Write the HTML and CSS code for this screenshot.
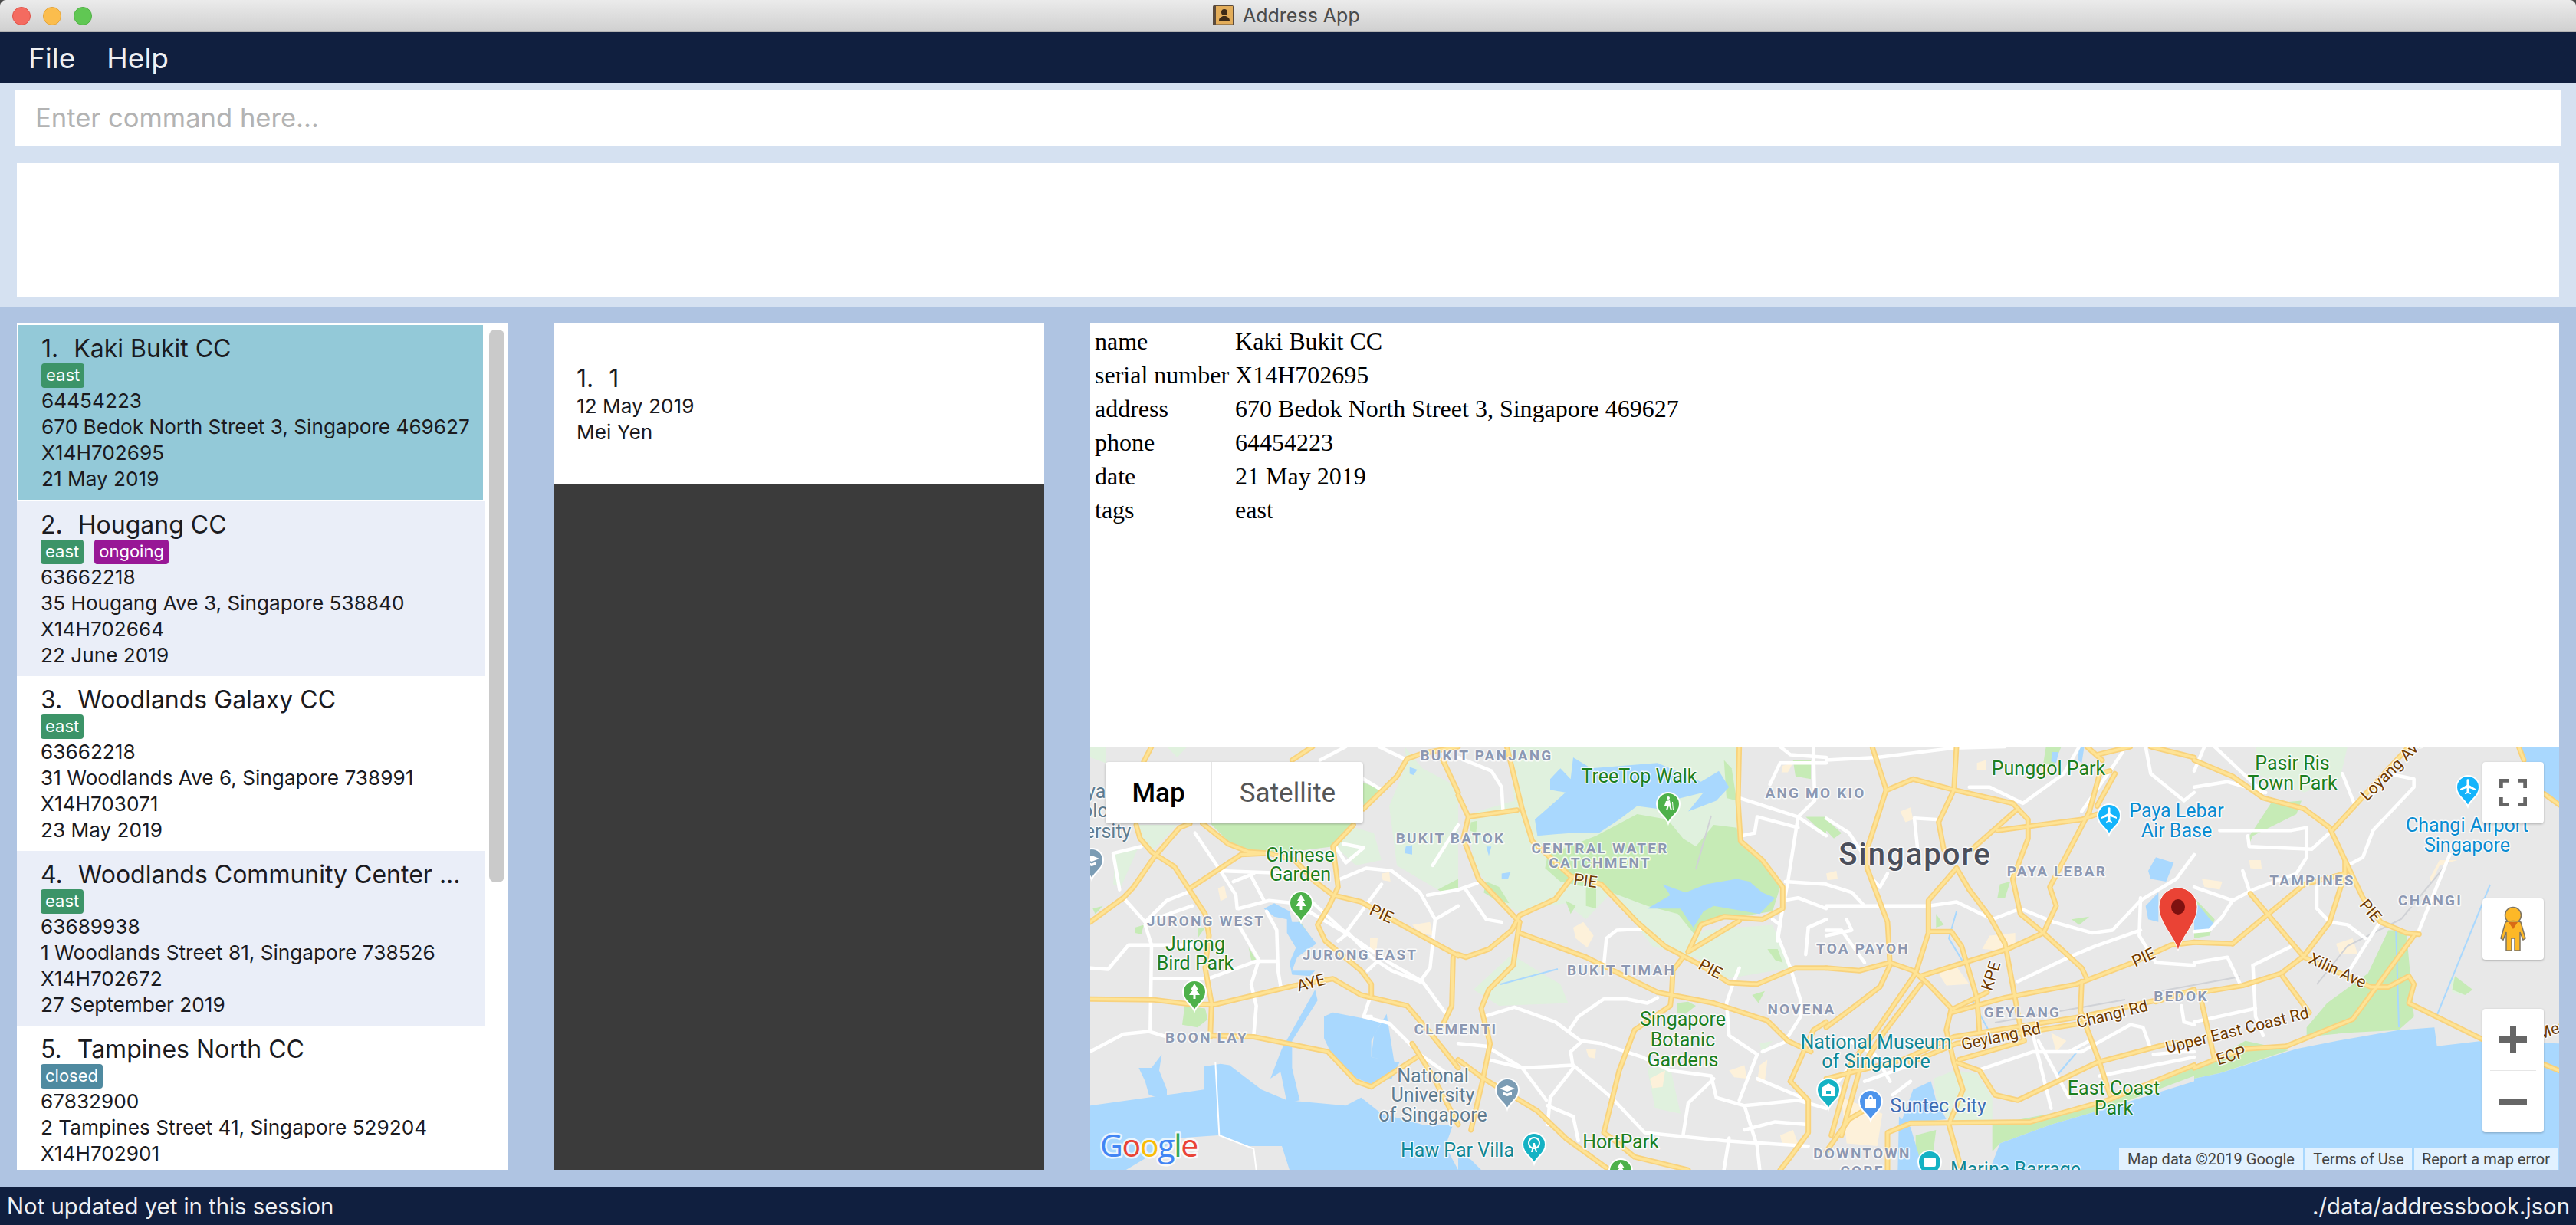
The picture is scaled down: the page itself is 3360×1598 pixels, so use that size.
FILE: index.html
```html
<!DOCTYPE html>
<html lang="en">
<head>
<meta charset="utf-8">
<title>Address App</title>
<link rel="stylesheet" href="styles.css">
</head>
<body>
<div class="app">
  <header class="titlebar">
    <div class="lights"><span class="light red"></span><span class="light yellow"></span><span class="light green"></span></div>
    <div class="wintitle">
      <svg class="appicon" viewBox="0 0 27 26"><rect x="0" y="0" width="27" height="26" rx="1.5" fill="#5a4a3c"/><rect x="4" y="1" width="22" height="23.5" fill="#e3ad5a"/><circle cx="15" cy="9" r="4" fill="#3d2a18"/><path d="M8 20c0-4 3-4.500 5-6h4c2 1.500 5 2 5 6z" fill="#3d2a18"/></svg>
      <span>Address App</span>
    </div>
  </header>
  <nav class="menubar"><span>File</span><span>Help</span></nav>
  <section class="topzone">
    <div class="command">Enter command here...</div>
    <div class="result"></div>
  </section>
  <main class="workspace">
    <section class="panel list">
      <div class="rows">
        <article class="row selected">
          <div class="name"><span>1.</span><span>Kaki Bukit CC</span></div>
          <div class="tags"><span class="tag east">east</span></div>
          <div>64454223</div>
          <div>670 Bedok North Street 3, Singapore 469627</div>
          <div>X14H702695</div>
          <div>21 May 2019</div>
        </article>
        <article class="row alt">
          <div class="name"><span>2.</span><span>Hougang CC</span></div>
          <div class="tags"><span class="tag east">east</span><span class="tag ongoing">ongoing</span></div>
          <div>63662218</div>
          <div>35 Hougang Ave 3, Singapore 538840</div>
          <div>X14H702664</div>
          <div>22 June 2019</div>
        </article>
        <article class="row">
          <div class="name"><span>3.</span><span>Woodlands Galaxy CC</span></div>
          <div class="tags"><span class="tag east">east</span></div>
          <div>63662218</div>
          <div>31 Woodlands Ave 6, Singapore 738991</div>
          <div>X14H703071</div>
          <div>23 May 2019</div>
        </article>
        <article class="row alt">
          <div class="name"><span>4.</span><span>Woodlands Community Center ...</span></div>
          <div class="tags"><span class="tag east">east</span></div>
          <div>63689938</div>
          <div>1 Woodlands Street 81, Singapore 738526</div>
          <div>X14H702672</div>
          <div>27 September 2019</div>
        </article>
        <article class="row">
          <div class="name"><span>5.</span><span>Tampines North CC</span></div>
          <div class="tags"><span class="tag closed">closed</span></div>
          <div>67832900</div>
          <div>2 Tampines Street 41, Singapore 529204</div>
          <div>X14H702901</div>
        </article>
      </div>
      <div class="thumb"></div>
    </section>
    <section class="panel middle">
      <div class="visit">
        <div class="name"><span>1.</span><span>1</span></div>
        <div>12 May 2019</div>
        <div>Mei Yen</div>
      </div>
      <div class="dark"></div>
    </section>
    <section class="panel detail">
      <div class="info">
        <table>
          <tr><td>name</td><td>Kaki Bukit CC</td></tr>
          <tr><td>serial number</td><td>X14H702695</td></tr>
          <tr><td>address</td><td>670 Bedok North Street 3, Singapore 469627</td></tr>
          <tr><td>phone</td><td>64454223</td></tr>
          <tr><td>date</td><td>21 May 2019</td></tr>
          <tr><td>tags</td><td>east</td></tr>
        </table>
      </div>
      <div class="map">
        <svg class="mapsvg" viewBox="0 0 1916 552" width="1916" height="552">
          <defs>
            <g id="highways">
              <g transform="scale(.33333 .35211)">
                <path d="M0 650 130 560 170 520 250 410 350 300 390 285"/>
                <path d="M180 290 195 340 240 390 330 445 385 525 450 620 465 700 450 820 475 950 470 1075"/>
                <path d="M390 525 590 400 700 395"/>
                <path d="M440 285 540 360 620 390 700 395 800 420 880 500 950 550 1060 575 1180 640 1440 775"/>
                <path d="M1030 290 950 370 970 520 935 590 890 660 920 720 1060 830 1100 880 1100 920"/>
                <path d="M0 935 250 938 400 955 490 955 800 885 950 860 1060 920 1240 960 1330 1060 1440 1190"/>
                <path d="M1420 780 1415 960 1380 1030"/>
                <path d="M470 1070 640 1075 930 1130 1040 1240 1100 1260 1280 1150"/>
                <path d="M1260 1100 1340 1220 1440 1400"/>
                <path d="M790 50 870 0"/><path d="M210 55 240 0"/>
                <path d="M1070 230 1200 110 1240 45 1300 25 1440 0"/>
                <path d="M1380 50 1440 170"/>
              </g>
              <g transform="translate(480 0) scale(.33333 .35211)">
                <path d="M190 0 250 230 290 350 440 480 560 510 700 650 810 740 950 810 1060 875 1170 880 1320 820 1440 820"/>
                <path d="M440 490 380 565 240 625 210 680 120 750 30 780 0 770"/>
                <path d="M0 180 40 260 20 340 80 490 170 580 240 650"/>
                <path d="M40 260 230 235"/>
                <path d="M240 690 500 780 780 910 1000 950 1210 1015 1290 1090 1380 1130"/>
                <path d="M240 650 215 810 120 900 90 970 125 1100 95 1240 50 1420"/>
                <path d="M0 1160 100 1230 310 1350 420 1450 580 1560"/>
                <path d="M880 780 840 830 835 920 830 960 690 1050 630 1200 570 1430 600 1450 690 1520 900 1568"/>
                <path d="M900 760 950 660 1040 630 1190 640 1270 600 1270 520 1190 420 1105 350 1095 200 1100 0"/>
                <path d="M900 760 1100 645"/>
                <path d="M1300 1240 1370 1310 1370 1430 1300 1520 1260 1568"/>
                <path d="M1300 1240 1390 1050 1440 1020"/>
              </g>
              <g transform="translate(960 0) scale(.33333 .35211)">
                <path d="M180 0 235 160 160 380 160 450 240 650 250 810 210 890 100 970 0 1040"/>
                <path d="M240 160 340 120 500 160 730 210 790 270 790 340 730 490 760 620 850 690 1000 820 1020 860"/>
                <path d="M500 160 510 0"/><path d="M500 160 440 280 460 380"/>
                <path d="M0 820 130 830 250 800 340 830 400 880 490 970 470 1050 500 1170 535 1270 480 1400 530 1568"/>
                <path d="M240 1568 240 1430 330 1395 800 1390 1100 1310 1440 1180"/>
                <path d="M510 450 400 570 400 690 350 840 190 1060 100 1170 20 1440"/>
                <path d="M370 880 225 1060 130 1200 60 1440"/>
                <path d="M400 685 490 685 530 740 590 930 600 1060"/>
                <path d="M370 850 710 750 850 690 900 590 875 520 1030 240 1070 100 1110 90"/>
                <path d="M510 450 560 530 640 630 700 730 760 1040 775 1090 520 1160"/>
                <path d="M500 970 630 910"/>
                <path d="M490 985 700 930 980 880 1200 800 1350 735 1440 725"/>
                <path d="M1000 870 995 980 1070 1170 1110 1290"/>
                <path d="M0 1230 300 1160 500 1075 1000 1000 1290 940"/>
                <path d="M330 1170 510 1100 1000 1025"/>
                <path d="M1290 945 1440 900"/>
                <path d="M510 1170 600 1200 660 1290 750 1310 1060 1170 1340 1100 1440 1095"/>
                <path d="M670 310 1000 270 1060 250"/>
                <path d="M570 380 750 230"/>
                <path d="M1060 30 1190 0"/><path d="M1020 0 1080 50"/><path d="M1270 0 1440 40"/>
                <path d="M1130 100 1060 220"/>
                <path d="M0 1500 90 1380 180 1330"/>
              </g>
              <g transform="translate(1440 0) scale(.33333 .35211)">
                <path d="M0 50 150 110 270 190 430 230 530 300 590 420 660 560 730 650 830 690 880 695"/>
                <path d="M590 420 590 470 530 650 430 775 340 840 190 885 60 905 0 910"/>
                <path d="M860 700 690 920 620 1010 360 1110 200 1120 80 1160 0 1190"/>
                <path d="M540 310 840 0"/>
                <path d="M150 730 430 510 590 470"/><path d="M0 725 150 730"/>
                <path d="M220 545 430 780 690 890 760 890 840 850 860 880 840 950 1130 1085 1428 1200"/>
                <path d="M345 850 450 985"/>
                <path d="M30 950 80 1160"/>
                <path d="M1370 175 1428 215"/><path d="M1270 0 1290 50"/>
              </g>
            </g>
          </defs>
          <rect class="land" width="1916" height="552"/>
          <g class="parks-light">
            <g transform="scale(.33333 .35211)">
              <path d="M0 0 60 0 60 60 0 40Z"/><path d="M300 0 380 0 340 40Z"/>
              <path d="M180 290 340 290 250 380 200 350Z"/><path d="M1000 290 1110 320 1140 420 1040 440 960 370Z"/>
              <path d="M1230 0 1300 80 1440 150 1440 500 1360 530 1200 440 1170 220 1240 60Z"/>
              <path d="M100 390 190 370 120 520 90 510Z"/>
              <path d="M10 620 50 590 40 600Z"/>
            </g>
            <g transform="translate(480 0) scale(.33333 .35211)">
              <path d="M200 0 1100 0 1090 300 900 420 800 540 950 680 1000 800 760 740 600 540 500 640 420 580 230 610 170 580 60 440 40 250 220 200Z"/>
              <path d="M960 680 1230 660 1300 820 1050 860 930 780Z"/>
              <path d="M210 770 310 830 400 880 430 950 160 960 60 900Z"/>
              <path d="M740 1190 830 1190 870 1360 770 1340Z"/>
              <path d="M1230 1090 1190 1140 1180 1100Z"/>
            </g>
            <g transform="translate(960 0) scale(.33333 .35211)">
              <path d="M420 1230 500 1200 590 1210 650 1300 650 1390 480 1390 430 1300Z"/>
            </g>
            <g transform="translate(1440 0) scale(.33333 .35211)">
              <path d="M240 0 600 0 570 120 430 170 240 100Z"/>
              <path d="M1000 850 1090 900 1040 920 1010 910Z"/>
            </g>
          </g>
          <g class="parks">
            <g transform="scale(.33333 .35211)">
              <path d="M470 285 1030 285 950 370 700 400 600 380 540 350Z"/>
              <path d="M1060 130 1140 160 1070 220Z"/>
              <path d="M370 960 450 970 460 1010 420 1040 360 1030Z"/>
              <path d="M780 680 820 645 880 730 830 745 800 720Z"/>
              <path d="M175 670 210 660 200 695 175 690Z"/><path d="M420 670 450 670 420 710Z"/><path d="M620 745 650 790 630 790Z"/>
              <path d="M1360 530 1440 490 1440 530 1370 535Z"/><path d="M10 600 50 590 20 620Z"/>
            </g>
            <g transform="translate(480 0) scale(.33333 .35211)">
              <path d="M540 330 700 250 820 270 880 340 930 370 1000 290 1090 300 1100 350 1200 430 1260 520 1230 610 1100 630 1000 640 920 690 860 620 740 590 600 540 540 490 540 600 500 590 500 520 400 500 340 450 350 400Z"/>
              <path d="M110 500 160 520 200 580 150 570 100 540Z"/><path d="M420 570 460 590 440 620Z"/><path d="M1210 750 1250 750 1270 800 1240 790Z"/>
              <path d="M1310 50 1380 50 1380 120 1320 110Z"/><path d="M1040 50 1070 80 1090 200 1050 190Z"/><path d="M1150 920 1200 905 1175 950Z"/>
              <path d="M855 950 900 945 930 960 890 990 855 985Z"/>
              <path d="M50 280 75 275 70 320 45 310Z"/><path d="M1360 260 1440 260 1440 330Z"/>
            </g>
            <g transform="translate(960 0) scale(.33333 .35211)">
              <path d="M0 270 60 320 30 340 0 310Z"/><path d="M860 0 920 0 890 70 850 60Z"/>
              <path d="M650 1400 1100 1320 1440 1190 1440 1220 1100 1340 880 1400 680 1470 650 1500Z"/>
              <path d="M350 1440 430 1420 410 1568 350 1568Z"/>
              <path d="M680 510 720 500 700 560 670 560Z"/><path d="M430 620 460 660 430 670Z"/>
              <path d="M960 640 1030 630 990 660Z"/>
            </g>
            <g transform="translate(1440 0) scale(.33333 .35211)">
              <path d="M440 1040 520 950 680 840 760 680 830 680 860 1000 800 1050 600 1060 440 1075Z"/>
              <path d="M0 1200 200 1090 370 1125 100 1210 0 1230Z"/>
              <path d="M210 340 300 210 420 200 400 250 230 330 210 370Z"/>
              <path d="M0 560 30 590 80 640 60 700 0 710Z"/>
              <path d="M1020 850 1090 900 1060 920 1010 900Z"/>
            </g>
          </g>
          <g class="water">
            <g transform="scale(.33333 .35211)">
              <path d="M0 1330 340 1285 445 1270 445 1185 510 1175 545 1180 670 1270 770 1310 1000 1330 1060 1300 1140 1360 1300 1400 1420 1400 1390 1480 1440 1568 780 1568 750 1480 620 1480 500 1440 350 1450 140 1568 0 1568Z"/>
              <path d="M190 1190 240 1190 280 1140 270 1200 300 1270 300 1310 230 1290 215 1240Z"/>
              <path d="M880 900 890 940 790 1090 790 1190 820 1310 770 1320 745 1205 705 1230 750 1120Z"/>
              <path d="M915 1000 950 985 1140 1020 1100 1090 1100 1150 1210 1170 1180 1230 1100 1250 1020 1220 940 1130 915 1080Z"/>
              <path d="M680 600 720 580 780 610 790 650 820 650 885 730 840 760 810 780 790 830 880 830 860 850 790 845 780 800 805 745 770 690 770 640 720 630Z"/>
              <path d="M1250 75 1280 85 1265 105 1250 100Z"/><path d="M1235 370 1260 365 1260 400 1230 395Z"/>
              <path d="M1190 1170 1160 990 1110 1070 1100 1150Z"/>
            </g>
            <g transform="translate(480 0) scale(.33333 .35211)">
              <path d="M360 120 400 80 440 120 450 40 520 80 780 60 950 130 1020 90 1060 150 1010 200 900 240 960 170 830 200 780 230 700 220 630 270 550 320 440 320 310 330 300 270 420 170 360 160Z"/>
              <path d="M800 510 890 540 970 510 1090 490 1140 500 1190 540 1240 560 1180 620 1000 590 960 610 920 670 870 600 740 600 830 550Z"/>
              <path d="M110 370 130 370 120 405Z"/><path d="M170 470 205 465 195 490 170 490Z"/>
              <path d="M0 1510 50 1530 90 1568 0 1568Z"/>
            </g>
            <g transform="translate(960 0) scale(.33333 .35211)">
              <path d="M340 1270 410 1240 430 1310 470 1380 290 1400Z"/>
              <path d="M280 1568 285 1370 330 1410 380 1568Z"/>
              <path d="M640 1568 680 1470 880 1400 1100 1340 1440 1240 1440 1568Z"/>
              <path d="M1260 460 1290 410 1360 430 1330 500 1270 490Z"/>
              <path d="M1250 590 1300 540 1300 650 1260 640Z"/>
              <path d="M990 0 1010 0 1000 60 985 50Z"/>
              <path d="M885 20 910 20 900 60 880 55Z"/>
            </g>
            <g transform="translate(1440 0) scale(.33333 .35211)">
              <path d="M0 1230 100 1210 400 1120 560 1090 800 1050 940 1040 950 1110 1130 1090 1428 1100 1428 1568 0 1568Z"/>
              <path d="M1280 0 1428 0 1428 220 1370 170 1300 60Z"/>
              <path d="M0 580 20 590 80 660 60 680 0 680Z"/>
            </g>
          </g>
          <g class="rivers">
            <path d="M1756 352 1826 180"/><path d="M1703 234 1707 366"/><path d="M1150 330 1180 385"/><path d="M1260 430 1290 395"/><path d="M535 310 610 290"/><path d="M1130 215 1120 250 1150 300"/>
          </g>
          <g class="blds">
            <g transform="scale(.33333 .35211)">
              <path d="M500 525 525 515 535 560 510 572Z"/><path d="M1095 710 1125 710 1120 760 1095 755Z"/><path d="M1260 660 1330 650 1340 700 1290 690Z"/><path d="M1140 470 1170 465 1175 500 1145 495Z"/>
            </g>
            <g transform="translate(480 0) scale(.33333 .35211)">
              <path d="M450 670 490 650 530 700 505 745 460 710Z"/><path d="M500 1120 540 1120 535 1155 510 1150Z"/><path d="M750 1230 810 1200 800 1260 760 1265Z"/><path d="M1060 1200 1120 1180 1130 1230 1080 1225Z"/><path d="M1180 1180 1210 1160 1200 1240 1170 1240Z"/><path d="M1260 1440 1310 1420 1330 1470 1270 1480Z"/><path d="M1270 70 1310 60 1290 95 1265 95Z"/>
            </g>
            <g transform="translate(960 0) scale(.33333 .35211)">
              <path d="M290 240 330 225 340 270 310 280Z"/><path d="M610 750 640 700 740 690 740 730 680 755Z"/><path d="M440 840 510 815 560 880 470 885Z"/><path d="M590 60 625 50 625 85 590 85Z"/><path d="M880 1060 940 1090 900 1130Z"/><path d="M0 470 40 460 45 490 5 495Z"/><path d="M60 1300 220 1360 200 1480 80 1470Z"/>
            </g>
            <g transform="translate(1440 0) scale(.33333 .35211)">
              <path d="M215 420 260 420 265 455 220 450Z"/><path d="M30 490 110 500 100 530 40 520Z"/><path d="M555 730 620 710 640 770 570 770Z"/><path d="M920 490 960 420 1030 420 960 440 930 500Z"/>
            </g>
          </g>
          <g class="rails">
            <path d="M1772 150 1710 225 1640 260 1600 310"/><path d="M1390 320 1500 300"/><path d="M790 160 810 90"/><path d="M1180 360 1350 330"/>
          </g>
          <g class="streets">
            <g transform="scale(.33333 .35211)">
              <path d="M0 820 70 825 150 735 400 735"/><path d="M215 660 240 735 235 1050"/>
              <path d="M240 860 460 860 650 795 730 795"/><path d="M0 1130 130 1065 230 1055 300 1075"/>
              <path d="M130 560 215 650 300 570 380 540"/><path d="M200 370 90 395 115 530"/>
              <path d="M410 320 510 460 570 550 575 600"/><path d="M510 460 650 465 800 470"/>
              <path d="M215 650 400 590"/><path d="M580 600 700 570 800 580 1000 690 1170 800 1300 870 1400 1000"/>
              <path d="M560 500 640 470"/><path d="M630 480 680 570"/>
              <path d="M690 610 730 680 735 830 745 885"/><path d="M580 660 660 790 630 880 650 960 640 1070"/>
              <path d="M1000 690 1140 510"/><path d="M970 720 1010 690 1100 780 1180 830 1290 870"/>
              <path d="M980 490 1080 450 1180 460 1290 540 1350 640 1330 820 1290 870"/>
              <path d="M1320 550 1440 530"/><path d="M1340 440 1440 290"/><path d="M1085 830 1130 790"/>
              <path d="M1095 930 1070 1000 1170 1025 1260 1110"/>
              <path d="M1290 1140 1440 1240"/><path d="M1070 120 1140 160"/><path d="M900 50 1000 0"/><path d="M1130 0 1230 45"/>
              <path d="M990 360 1070 375 1000 430 960 370"/>
              <path d="M850 560 1000 690"/><path d="M1350 640 1440 590"/><path d="M1100 1000 1070 1000"/>
            </g>
            <g class="thin" transform="scale(.33333 .35211)">
              <path d="M490 1170 505 1440 640 1490 650 1568"/>
            </g>
            <g transform="translate(480 0) scale(.33333 .35211)">
              <path d="M0 40 130 90 170 150 175 230"/><path d="M0 530 75 505"/><path d="M30 530 110 640 170 650"/>
              <path d="M100 1000 220 965 380 1020 480 1090 560 1100 720 1150 830 1200 990 1220 1010 1300 1120 1330 1330 1310 1440 1340"/>
              <path d="M435 1050 470 1000 570 935 660 935 740 950 780 930"/>
              <path d="M480 1095 440 1130 450 1190 360 1300 350 1400"/>
              <path d="M0 1100 110 1110 250 1190 345 1310"/>
              <path d="M120 1160 250 1190 450 1180 600 1300 730 1430 1040 1460 1200 1470 1370 1480"/>
              <path d="M350 1330 450 1370 470 1460"/><path d="M570 810 580 710 620 680 720 675"/>
              <path d="M1000 1230 900 1320 880 1440"/><path d="M1100 1310 1170 1140 1060 1070 1050 950"/>
              <path d="M1190 1130 1290 1090"/><path d="M1120 1330 1170 1480 1180 1568"/><path d="M1060 1450 1040 1568"/>
              <path d="M1100 190 1330 260 1440 330"/><path d="M1330 260 1290 500 1250 700 1300 820 1340 940 1340 1000 1280 1090"/>
              <path d="M1280 500 1440 510"/><path d="M1270 570 1330 560 1440 600"/><path d="M1230 640 1260 660 1250 720"/>
              <path d="M1110 330 1160 320 1170 260 1330 300"/><path d="M1220 140 1260 60 1440 60"/><path d="M1260 0 1300 30 1440 40"/>
              <path d="M1390 0 1395 200 1330 260"/><path d="M1050 950 1075 880 1100 820"/>
              <path d="M1120 1420 1240 1390 1370 1400"/><path d="M1170 1230 1370 1310"/>
              <path d="M1370 670 1440 640"/><path d="M1370 670 1360 770"/>
            </g>
            <g transform="translate(960 0) scale(.33333 .35211)">
              <path d="M0 50 200 40 500 5 700 0"/><path d="M0 265 90 320 160 420"/><path d="M0 510 100 540 150 590"/>
              <path d="M0 590 100 590 400 590 510 575 650 640 760 600 890 650 1040 690 1120 680 1230 570 1370 490 1440 400"/>
              <path d="M210 520 170 480"/><path d="M210 520 240 470"/><path d="M345 265 430 270"/><path d="M345 265 360 400"/>
              <path d="M0 700 100 680 80 640"/><path d="M0 680 60 680 150 800"/>
              <path d="M560 150 640 150 770 210 930 100 990 0"/><path d="M750 870 950 780 1050 740 1230 680"/>
              <path d="M1230 560 1225 700 1290 800 1440 810"/><path d="M1250 0 1270 100 1400 200 1440 170"/>
              <path d="M1160 20 1110 90 1000 240"/><path d="M810 1070 880 1340"/><path d="M830 1090 950 1300"/>
              <path d="M590 1200 810 1130 1000 1130"/><path d="M1000 1130 1190 1030 1240 1040 1270 1120"/><path d="M950 1130 1030 1090"/>
              <path d="M1070 1220 1440 1150"/><path d="M1280 1140 1390 1130 1440 1130"/><path d="M1390 960 1400 1020 1440 1030"/>
              <path d="M0 1300 190 1060"/><path d="M260 1290 330 1240"/><path d="M70 1080 190 1140 250 1240"/><path d="M150 1240 330 1180"/>
            </g>
            <g transform="translate(1440 0) scale(.33333 .35211)">
              <path d="M0 150 130 130 280 170"/><path d="M80 0 270 170"/>
              <path d="M100 310 380 310 440 300 440 410 400 470 230 530 150 570 0 520"/>
              <path d="M210 330 215 370 460 380 540 310"/><path d="M190 460 220 545"/>
              <path d="M480 520 480 600 530 650 600 660 670 710"/><path d="M720 660 600 840"/><path d="M1000 400 880 680"/>
              <path d="M150 570 110 630 60 680 0 685"/><path d="M0 800 130 780 180 880"/>
              <path d="M230 810 380 740"/><path d="M230 810 240 1000 270 1070"/><path d="M0 1020 240 970"/>
              <path d="M580 100 630 220"/><path d="M760 100 860 120 860 150 780 230 700 310 660 410 600 440"/>
              <path d="M40 0 0 90"/>
            </g>
          </g>
          <use href="#highways" class="hw-out"/>
          <use href="#highways" class="hw-in"/>

          <g class="lb dist">
            <text x="151" y="234">JURONG WEST</text><text x="352" y="278">JURONG EAST</text>
            <text x="152" y="386">BOON LAY</text><text x="477" y="375">CLEMENTI</text>
            <text x="517" y="18">BUKIT PANJANG</text><text x="470" y="126">BUKIT BATOK</text>
            <text x="665" y="139">CENTRAL WATER</text><text x="665" y="158">CATCHMENT</text>
            <text x="693" y="298">BUKIT TIMAH</text><text x="928" y="349">NOVENA</text>
            <text x="946" y="67">ANG MO KIO</text><text x="1261" y="169">PAYA LEBAR</text>
            <text x="1008" y="270">TOA PAYOH</text><text x="1216" y="353">GEYLANG</text>
            <text x="1423" y="332">BEDOK</text><text x="1594" y="181">TAMPINES</text>
            <text x="1748" y="207">CHANGI</text><text x="1007" y="537">DOWNTOWN</text><text x="1007" y="560">CORE</text>
          </g>
          <text class="lb city" x="1076" y="154">Singapore</text>
          <g class="lb poi green-t">
            <text x="274" y="150">Chinese</text><text x="274" y="175">Garden</text>
            <text x="137" y="266">Jurong</text><text x="137" y="291">Bird Park</text>
            <text x="716" y="47">TreeTop Walk</text>
            <text x="773" y="364">Singapore</text><text x="773" y="391">Botanic</text><text x="773" y="417">Gardens</text>
            <text x="692" y="524">HortPark</text><text x="1250" y="37">Punggol Park</text>
            <text x="1335" y="454">East Coast</text><text x="1335" y="480">Park</text>
            <text x="1568" y="30">Pasir Ris</text><text x="1568" y="56">Town Park</text>
          </g>
          <g class="lb poi grey-t">
            <text x="-1" y="67">Nanyang</text><text x="-1" y="92">Technological</text><text x="-1" y="119">University</text>
            <text x="447" y="438">National</text><text x="447" y="463">University</text><text x="447" y="489">of Singapore</text>
          </g>
          <g class="lb poi teal-t">
            <text x="479" y="535">Haw Par Villa</text><text x="1025" y="394">National Museum</text><text x="1025" y="419">of Singapore</text>
            <text x="1207" y="560">Marina Barrage</text>
          </g>
          <g class="lb poi blue-t">
            <text x="1417" y="92">Paya Lebar</text><text x="1417" y="118">Air Base</text>
            <text x="1796" y="111">Changi Airport</text><text x="1796" y="137">Singapore</text>
          </g>
          <text class="lb poi shop-t" x="1106" y="477">Suntec City</text>
          <g class="lb road">
            <text x="380" y="225" transform="rotate(25 380 218)">PIE</text>
            <text x="288" y="315" transform="rotate(-15 288 308)">AYE</text>
            <text x="646" y="182" transform="rotate(8 646 175)">PIE</text>
            <text x="809" y="297" transform="rotate(28 809 290)">PIE</text>
            <text x="1175" y="306" transform="rotate(-72 1175 299)">KPE</text>
            <text x="1374" y="282" transform="rotate(-25 1374 275)">PIE</text>
            <text x="1188" y="385" transform="rotate(-12 1188 378)">Geylang Rd</text>
            <text x="1333" y="356" transform="rotate(-14 1333 349)">Changi Rd</text>
            <text x="1496" y="377" transform="rotate(-14 1496 370)">Upper East Coast Rd</text>
            <text x="1488" y="410" transform="rotate(-17 1488 403)">ECP</text>
            <text x="1627" y="299" transform="rotate(25 1627 292)">Xilin Ave</text>
            <text x="1670" y="221" transform="rotate(50 1670 214)">PIE</text>
            <text x="1701" y="38" transform="rotate(-45 1697 33)">Loyang Ave</text>
            <text x="1905" y="377" transform="rotate(-20 1905 370)">Mer</text>
          </g>

          <g class="pin p-green" transform="translate(275 204)"><path d="M0 25C-3 16-15 12-15 0A15 15 0 1 1 15 0C15 12 3 16 0 25Z"/><path class="glyph" d="M0-11-5-3-2-3-7 4-1.500 4-1.500 9 1.500 9 1.500 4 7 4 2-3 5-3Z"/></g>
          <g class="pin p-green" transform="translate(136 320)"><path d="M0 25C-3 16-15 12-15 0A15 15 0 1 1 15 0C15 12 3 16 0 25Z"/><path class="glyph" d="M0-11-5-3-2-3-7 4-1.500 4-1.500 9 1.500 9 1.500 4 7 4 2-3 5-3Z"/></g>
          <g class="pin p-green" transform="translate(692 553)"><path d="M0 25C-3 16-15 12-15 0A15 15 0 1 1 15 0C15 12 3 16 0 25Z"/><path class="glyph" d="M0-11-5-3-2-3-7 4-1.500 4-1.500 9 1.500 9 1.500 4 7 4 2-3 5-3Z"/></g>
          <g class="pin p-green" transform="translate(754 75)"><path d="M0 25C-3 16-15 12-15 0A15 15 0 1 1 15 0C15 12 3 16 0 25Z"/><circle class="glyph" cx="0" cy="-8" r="2"/><path class="glyph" d="M-3-4 2-5 3 0 5 8 3 8 1 2-1 8-3 8-1 0-2 3-5 2ZM6-3 7 8 6 8 5-3Z"/></g>
          <g class="pin p-grey" transform="translate(544 448)"><path d="M0 25C-3 16-15 12-15 0A15 15 0 1 1 15 0C15 12 3 16 0 25Z"/><path class="glyph" d="M-10-2 0-6 10-2 0 2ZM-6 2 0 4.500 6 2 6 6 0 8-6 6Z"/></g>
          <g class="pin p-grey" transform="translate(2 148)"><path d="M0 25C-3 16-15 12-15 0A15 15 0 1 1 15 0C15 12 3 16 0 25Z"/><path class="glyph" d="M-10-2 0-6 10-2 0 2ZM-6 2 0 4.500 6 2 6 6 0 8-6 6Z"/></g>
          <g class="pin p-teal" transform="translate(579 519)"><path d="M0 25C-3 16-15 12-15 0A15 15 0 1 1 15 0C15 12 3 16 0 25Z"/><circle class="glyph-line" cx="0" cy="-2" r="7"/><path class="glyph" d="M-1-2 1-2 4 10 2 10 0 3-2 10-4 10Z"/></g>
          <g class="pin p-teal" transform="translate(963 448)"><path d="M0 25C-3 16-15 12-15 0A15 15 0 1 1 15 0C15 12 3 16 0 25Z"/><path class="glyph" d="M0-9-9-3-9 8 9 8 9-3ZM-3 1 3 1 3 5-3 5Z"/></g>
          <g class="pin p-teal" transform="translate(1095 542)"><path d="M0 25C-3 16-15 12-15 0A15 15 0 1 1 15 0C15 12 3 16 0 25Z"/><rect class="glyph" x="-8" y="-6" width="16" height="12" rx="2"/></g>
          <g class="pin p-shop" transform="translate(1018 463)"><path d="M0 25C-3 16-15 12-15 0A15 15 0 1 1 15 0C15 12 3 16 0 25Z"/><path class="glyph" d="M-7-4-7 8 7 8 7-4 3-4C3-10-3-10-3-4ZM-1.500-4C-1.500-7 1.500-7 1.500-4Z"/></g>
          <g class="pin p-sky" transform="translate(1329 90)"><path d="M0 25C-3 16-15 12-15 0A15 15 0 1 1 15 0C15 12 3 16 0 25Z"/><path class="glyph" d="M-1.500-10C-1-11 1-11 1.500-10L1.500-3 10 2 10 4 1.500 1 1.500 6 4 8 4 9 0 8-4 9-4 8-1.500 6-1.500 1-10 4-10 2-1.500-3Z"/></g>
          <g class="pin p-sky" transform="translate(1797 53)"><path d="M0 25C-3 16-15 12-15 0A15 15 0 1 1 15 0C15 12 3 16 0 25Z"/><path class="glyph" d="M-1.500-10C-1-11 1-11 1.500-10L1.500-3 10 2 10 4 1.500 1 1.500 6 4 8 4 9 0 8-4 9-4 8-1.500 6-1.500 1-10 4-10 2-1.500-3Z"/></g>

          <g transform="translate(1419 209)">
            <path class="redpin" d="M0 58C-3 40-25 22-25 0A25 25 0 1 1 25 0C25 22 3 40 0 58Z"/>
            <ellipse class="redpin-dot" cx="0" cy="0" rx="9" ry="10"/>
          </g>
          <text class="google" x="13" y="535"><tspan class="g-blue">G</tspan><tspan class="g-red">o</tspan><tspan class="g-yellow">o</tspan><tspan class="g-blue">g</tspan><tspan class="g-green">l</tspan><tspan class="g-red">e</tspan></text>
        </svg>

        <div class="maptype"><span class="active">Map</span><span>Satellite</span></div>
        <button class="mapbtn fs" aria-label="Fullscreen"><svg viewBox="0 0 36 36" width="36" height="36"><path class="iconline" d="M2 12V2H12M24 2H34V12M2 24V34H12M24 34H34V24"/></svg></button>
        <button class="mapbtn sv" aria-label="Street View"><svg viewBox="0 0 36 60" width="36" height="60"><circle class="peg" cx="18" cy="12" r="10.500"/><path class="peg" d="M8 21C12 19 24 19 28 21L34 42 31 44 27 34 27 58 20 58 20 42 16 42 16 58 9 58 9 34 5 44 2 42Z"/><path class="pegv" d="M12 21 24 21 18 30Z"/></svg></button>
        <div class="zoomctl">
          <button class="zbtn" aria-label="Zoom in"><span class="plus"></span></button>
          <div class="zsep"></div>
          <button class="zbtn" aria-label="Zoom out"><span class="minus"></span></button>
        </div>
        <div class="attrib"><span class="a1">Map data ©2019 Google</span><span class="a2">Terms of Use</span><span class="a3">Report a map error</span></div>
      </div>
    </section>
  </main>
  <footer class="status"><span>Not updated yet in this session</span><span>./data/addressbook.json</span></footer>
</div>
</body>
</html>
```
FILE: styles.css
```css
* { box-sizing: border-box; }
html, body { margin: 0; height: 100%; background: #4a4a4a; }
body { overflow: hidden; font-family: Inter, "Liberation Sans", sans-serif; }
.app { width: 3360px; height: 1598px; display: flex; flex-direction: column; }

.titlebar { height: 42px; flex: none; background: linear-gradient(#ebebeb, #d0d0d0); border-bottom: 1px solid #b4b4b4; border-radius: 8px 8px 0 0; display: flex; align-items: center; position: relative; }
.lights { display: flex; gap: 16px; padding-left: 16px; }
.light { width: 24px; height: 24px; border-radius: 50%; }
.red { background: #f46b60; border: 1px solid #e0544a; }
.yellow { background: #fbbd4d; border: 1px solid #e3a33a; }
.green { background: #60c753; border: 1px solid #50b045; }
.wintitle { position: absolute; left: 1582px; top: 7px; display: flex; align-items: center; gap: 12px; font-size: 25px; color: #4a4a4a; height: 26px; }
.appicon { width: 27px; height: 26px; display: block; }

.menubar { height: 66px; flex: none; background: #101f3f; color: #eef0f4; font-size: 37px; display: flex; gap: 41px; align-items: center; padding-left: 37px; }

.topzone { height: 292px; flex: none; background: #d5e1f1; padding: 10px 20px 0; }
.command { height: 72px; background: #fff; color: #b3b3b3; font-size: 34.6px; line-height: 70px; padding-left: 26px; }
.result { height: 176px; margin: 22px 2px 0; background: #fff; }

.workspace { flex: 1; min-height: 0; background: #afc4e2; padding: 22px 0 22px 22px; display: grid; grid-template-columns: 640px 640px 1916px; column-gap: 60px; }
.panel { background: #fff; min-height: 0; overflow: hidden; position: relative; }

.list { display: flex; }
.rows { width: 610px; flex: none; overflow: hidden; }
.row { height: 228px; padding: 13px 0 0 31px; font-size: 26.2px; line-height: 34px; color: #1b1b1f; white-space: nowrap; }
.row.alt { background: #eaeef8; }
.row.selected { margin: 2px 2px 2px 2px; background: #93c9d8; padding-left: 30px; }
.name { font-size: 32px; line-height: 36px; height: 37px; display: flex; gap: 20px; }
.tags { display: flex; gap: 14px; height: 32px; }
.tag { height: 32px; line-height: 31px; padding: 0 6px; border-radius: 4px; color: #fff; font-size: 22px; }
.east { background: #3c9468; }
.ongoing { background: #981796; }
.closed { background: #4f8aa0; }
.thumb { width: 20px; height: 721px; margin: 8px 0 0 6px; background: #cacaca; border-radius: 8px; flex: none; }

.middle { display: flex; flex-direction: column; }
.visit { height: 210px; padding: 54px 0 0 30px; font-size: 26.2px; line-height: 34px; color: #1b1b1f; }
.dark { flex: 1; background: #3b3b3b; }

.detail { display: flex; flex-direction: column; }
.info { height: 552px; flex: none; }
.info table { border-spacing: 4px; border-collapse: separate; font-family: "Liberation Serif", serif; font-size: 32px; color: #000; line-height: 36px; margin-top: -1px; }
.info td { padding: 2px; }

.map { height: 552px; flex: none; position: relative; overflow: hidden; }
.mapsvg { display: block; font-family: Roboto, sans-serif; }
.mapsvg path { vector-effect: non-scaling-stroke; }
.land { fill: #e8e8e8; }
.parks-light path { fill: #e0f1de; }
.parks path { fill: #c6ebb6; }
.water path { fill: #a9d8fe; }
.blds path { fill: #fdf1da; }
.rails path { fill: none; stroke: #d0d2d6; stroke-width: 2; }
.rivers path { fill: none; stroke: #a9d8fe; stroke-width: 2; }
.streets path { fill: none; stroke: #fff; stroke-width: 4.5; stroke-linejoin: round; stroke-linecap: round; }
.streets .thin path { stroke-width: 2; }
.hw-out { fill: none; stroke: #f8d27c; stroke-width: 7; stroke-linejoin: round; stroke-linecap: round; }
.hw-in { fill: none; stroke: #fee395; stroke-width: 3.5; stroke-linejoin: round; stroke-linecap: round; }

.lb text, text.lb { paint-order: stroke; stroke: #fff; stroke-opacity: .8; stroke-width: 3px; stroke-linejoin: round; }
.dist text { text-anchor: middle; font-size: 19px; font-weight: 700; letter-spacing: 2.2px; fill: #8c98b2; }
.city { text-anchor: middle; font-size: 40px; font-weight: 500; letter-spacing: 2px; fill: #4b4f5b; }
.poi text, text.poi { text-anchor: middle; font-size: 25px; }
.green-t text { fill: #1c7f1f; }
.grey-t text { fill: #5f7c90; }
.teal-t text { fill: #0f8796; }
.blue-t text { fill: #0a8cd2; }
.shop-t { fill: #3f6db4; }
.road text { text-anchor: middle; font-size: 21px; fill: #6f3a00; }

.pin > path:first-child { stroke: #fff; stroke-width: 2; }
.p-green > path:first-child { fill: #4db14a; }
.p-grey > path:first-child { fill: #7b9cb4; }
.p-teal > path:first-child { fill: #14b2c4; }
.p-shop > path:first-child { fill: #4d94ec; }
.p-sky > path:first-child { fill: #14b4fb; }
.glyph { fill: #fff; }
.glyph-line { fill: none; stroke: #fff; stroke-width: 2; }
.redpin { fill: #ea4335; stroke: #fff; stroke-width: 1; }
.redpin-dot { fill: #7e1110; }

.google { font-family: "Open Sans", sans-serif; font-size: 41px; font-weight: 500; paint-order: stroke; stroke: #fff; stroke-width: 5px; stroke-opacity: .75; stroke-linejoin: round; letter-spacing: -1.3px; }
.g-blue { fill: #4285f4; }
.g-red { fill: #ea4335; }
.g-yellow { fill: #fbbc05; }
.g-green { fill: #34a853; }

.maptype { position: absolute; left: 20px; top: 20px; width: 336px; height: 80px; background: #fff; border-radius: 4px; display: flex; box-shadow: 0 1px 3px rgba(0,0,0,.25); font-family: Roboto, sans-serif; font-size: 35px; color: #565656; }
.maptype span { display: flex; align-items: center; justify-content: center; }
.maptype .active { width: 139px; font-weight: 500; color: #000; border-right: 1px solid #e6e6e6; }
.maptype span:last-child { flex: 1; }
.mapbtn { position: absolute; left: 1816px; width: 80px; height: 80px; border: 0; padding: 0; background: #fff; border-radius: 4px; display: flex; align-items: center; justify-content: center; box-shadow: 0 1px 3px rgba(0,0,0,.25); }
.fs { top: 20px; }
.sv { top: 198px; }
.iconline { fill: none; stroke: #666; stroke-width: 5.500; }
.peg { fill: #fdb827; stroke: #7d7463; stroke-width: 1.500; }
.pegv { fill: #d96a16; }
.zoomctl { position: absolute; left: 1816px; top: 342px; width: 80px; height: 161px; background: #fff; border-radius: 4px; box-shadow: 0 1px 3px rgba(0,0,0,.25); display: flex; flex-direction: column; align-items: center; }
.zbtn { width: 80px; height: 80px; border: 0; padding: 0; background: none; display: flex; align-items: center; justify-content: center; }
.zsep { width: 60px; height: 1px; background: #e6e6e6; flex: none; }
.plus { width: 36px; height: 36px; display: block; background: linear-gradient(#666, #666) center / 36px 8px no-repeat, linear-gradient(#666, #666) center / 8px 36px no-repeat; }
.minus { width: 36px; height: 8px; display: block; background: #666; }
.attrib { position: absolute; right: 2px; bottom: 0; height: 28px; display: flex; gap: 3px; font-family: Roboto, sans-serif; font-size: 20px; line-height: 28px; color: #444; }
.attrib span { background: rgba(255,255,255,.65); text-align: center; }
.a1 { width: 240px; }
.a2 { width: 139px; }
.a3 { width: 187px; }

.status { height: 50px; flex: none; background: #101f3f; color: #eef0f4; font-size: 29.3px; display: flex; justify-content: space-between; align-items: center; padding: 0 8px 0 9px; }
```
